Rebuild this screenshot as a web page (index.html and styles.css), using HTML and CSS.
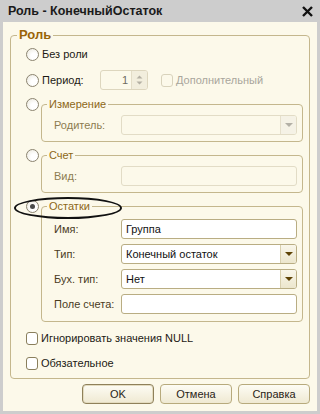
FILE: index.html
```html
<!DOCTYPE html>
<html lang="ru">
<head>
    <meta charset="UTF-8">
    <meta name="viewport" content="width=device-width, initial-scale=1.0">
    <title>Роль - КонечныйОстаток</title>
    <link rel="stylesheet" href="styles.css">
</head>
<body>
    <div class="window">
        <div class="titlebar">
            <span class="title">Роль - КонечныйОстаток</span>
            <svg class="close" width="11" height="11" viewBox="0 0 11 11">
                <path d="M1 1 L10 10 M10 1 L1 10" stroke="#111" stroke-width="2.4" fill="none"/>
            </svg>
        </div>

        <div class="content">
            <fieldset class="group main">
                <legend>Роль</legend>
                <div class="group-body">

                    <div class="row">
                        <span class="radio"></span>
                        <span class="text">Без роли</span>
                    </div>

                    <div class="row row-period">
                        <span class="radio"></span>
                        <span class="text period-label">Период:</span>
                        <div class="spin">
                            <span class="spin-value">1</span>
                            <span class="spin-btns">
                                <svg width="7" height="12" viewBox="0 0 7 12">
                                    <path d="M0.5 4.5 L3.5 1.5 L6.5 4.5 Z M0.5 7.5 L3.5 10.5 L6.5 7.5 Z" fill="#b4b0a4"/>
                                </svg>
                            </span>
                        </div>
                        <span class="check disabled"></span>
                        <span class="text dim">Дополнительный</span>
                    </div>

                    <div class="sub sub-first">
                        <span class="radio"></span>
                        <fieldset class="group inner">
                            <legend>Измерение</legend>
                            <div class="group-body">
                                <div class="field-row">
                                    <span class="field-label dim-label">Родитель:</span>
                                    <div class="input disabled select">
                                        <span class="value"></span>
                                        <span class="drop"><i class="arrow"></i></span>
                                    </div>
                                </div>
                            </div>
                        </fieldset>
                    </div>

                    <div class="sub">
                        <span class="radio"></span>
                        <fieldset class="group inner">
                            <legend>Счет</legend>
                            <div class="group-body">
                                <div class="field-row">
                                    <span class="field-label dim-label">Вид:</span>
                                    <div class="input disabled"></div>
                                </div>
                            </div>
                        </fieldset>
                    </div>

                    <div class="sub">
                        <span class="radio on"></span>
                        <fieldset class="group inner balances">
                            <legend>Остатки</legend>
                            <div class="group-body">
                                <div class="field-row">
                                    <span class="field-label">Имя:</span>
                                    <div class="input"><span class="value">Группа</span></div>
                                </div>
                                <div class="field-row">
                                    <span class="field-label">Тип:</span>
                                    <div class="input select">
                                        <span class="value">Конечный остаток</span>
                                        <span class="drop"><i class="arrow"></i></span>
                                    </div>
                                </div>
                                <div class="field-row">
                                    <span class="field-label">Бух. тип:</span>
                                    <div class="input select">
                                        <span class="value">Нет</span>
                                        <span class="drop"><i class="arrow"></i></span>
                                    </div>
                                </div>
                                <div class="field-row">
                                    <span class="field-label">Поле счета:</span>
                                    <div class="input"></div>
                                </div>
                            </div>
                        </fieldset>
                    </div>

                    <div class="row row-check">
                        <span class="check"></span>
                        <span class="text">Игнорировать значения NULL</span>
                    </div>

                    <div class="row row-check">
                        <span class="check"></span>
                        <span class="text">Обязательное</span>
                    </div>
                </div>
            </fieldset>

            <div class="buttons">
                <button class="btn default">OK</button>
                <button class="btn">Отмена</button>
                <button class="btn">Справка</button>
            </div>
        </div>

        <!-- hand-drawn highlight around the selected option -->
        <div class="mark"></div>
    </div>
</body>
</html>
```

FILE: styles.css
```css
body {
    margin: 0;
    padding: 0;
    font-family: "Liberation Sans", Arial, sans-serif;
    font-size: 11px;
    color: #1c1a14;
}
.window {
    position: relative;
    width: 320px;
    height: 414px;
    background: #cdcdcd;
    box-sizing: border-box;
    padding: 0 3px 3px 3px;
    display: flex;
    flex-direction: column;
}
.titlebar {
    height: 22px;
    display: flex;
    align-items: center;
    justify-content: space-between;
    padding: 0 4px 0 5px;
}
.title {
    font-weight: bold;
    font-size: 12.5px;
    color: #1a1a1a;
}
.close {
    display: block;
}
.content {
    flex: 1;
    background: #fcf9ea;
    padding: 5px 7px 0 7px;
}

/* group boxes */
.group {
    margin: 0;
    padding: 0;
    border: 1px solid #c4b78d;
    border-radius: 4px;
    min-inline-size: 0;
}
.group legend {
    padding: 0 2px;
    line-height: 14px;
}
.main > legend {
    margin-left: 6px;
    font-weight: bold;
    font-size: 13px;
    line-height: 16px;
    color: #9a6408;
}
.main > .group-body {
    padding: 1px 6px 5px 15px;
}
.inner {
    flex: 1;
}
.inner > legend {
    margin-left: 5px;
    color: #8d6716;
}
.inner > .group-body {
    padding: 4px 5px 6px 12px;
}
.balances > .group-body {
    padding-top: 6px;
    padding-bottom: 7px;
}

/* rows */
.row {
    height: 20px;
    display: flex;
    align-items: center;
}
.row-period,
.row-check {
    margin-top: 6px;
}
.row-check + .row-check {
    margin-top: 5px;
}
.text {
    margin-left: 3px;
    white-space: nowrap;
}
.dim {
    color: #a9a69c;
}
.period-label {
    width: 58px;
}
.sub {
    display: flex;
    align-items: flex-start;
    margin-top: 6px;
}
.sub-first {
    margin-top: 7px;
}
.sub > .radio {
    margin-top: 1px;
    margin-right: 2px;
}

/* radio and check */
.radio {
    flex: none;
    width: 11px;
    height: 11px;
    border: 1px solid #8b8470;
    border-radius: 50%;
    background: radial-gradient(circle at 65% 65%, #ffffff 30%, #e9e6da 100%);
    position: relative;
}
.radio.on::after {
    content: "";
    position: absolute;
    left: 3px;
    top: 3px;
    width: 5px;
    height: 5px;
    border-radius: 50%;
    background: #4a4a4a;
}
.check {
    flex: none;
    width: 10px;
    height: 11px;
    border: 1px solid #8a7f5c;
    border-radius: 3px;
    background: #fff;
}
.check.disabled {
    margin-left: 13px;
    border-color: #d9d3bc;
    background: #fcf9ea;
}

/* spinner */
.spin {
    width: 46px;
    height: 18px;
    border: 1px solid #ddd6be;
    border-radius: 3px;
    display: flex;
    overflow: hidden;
}
.spin-value {
    flex: 1;
    text-align: right;
    padding-right: 3px;
    line-height: 18px;
    color: #6e6b60;
}
.spin-btns {
    width: 15px;
    border-left: 1px solid #e3ddc7;
    background: #f2eedd;
    display: flex;
    align-items: center;
    justify-content: center;
}

/* fields */
.field-row {
    display: flex;
    align-items: center;
}
.field-row + .field-row {
    margin-top: 5px;
}
.field-label {
    width: 67px;
    flex: none;
    color: #4a3c1e;
}
.dim-label {
    color: #8d7c50;
}
.input {
    flex: 1;
    height: 18px;
    border: 1px solid #b9ad83;
    border-radius: 3px;
    background: #fff;
    display: flex;
    align-items: center;
    overflow: hidden;
}
.input.disabled {
    background: #fcf9ea;
    border-color: #e2dcc6;
}
.value {
    flex: 1;
    padding-left: 4px;
    color: #111;
    white-space: nowrap;
}
.drop {
    width: 15px;
    height: 18px;
    border-left: 1px solid #d8cfae;
    background: linear-gradient(#f9f6ea, #ece6cd);
    display: flex;
    align-items: center;
    justify-content: center;
}
.arrow {
    width: 0;
    height: 0;
    border-left: 4px solid transparent;
    border-right: 4px solid transparent;
    border-top: 4px solid #5e4305;
}
.disabled .drop {
    background: #f5f2e6;
    border-left-color: #e6e0cc;
}
.disabled .arrow {
    border-top-color: #b3b0a6;
}

/* buttons */
.buttons {
    display: flex;
    justify-content: flex-end;
    gap: 6px;
    margin-top: 5px;
}
.btn {
    width: 72px;
    height: 20px;
    padding: 0;
    font-family: inherit;
    font-size: 11px;
    color: #2a2416;
    border: 1px solid #b7aa7c;
    border-radius: 4px;
    background: linear-gradient(#fdfcf4, #efe9d2);
}
.btn.default {
    border-color: #8f815a;
    box-shadow: inset 0 0 0 1px #e4dcc0;
}

/* overlay annotation */
.mark {
    position: absolute;
    left: 14px;
    top: 197px;
    width: 104px;
    height: 18px;
    border: 2px solid #111;
    border-radius: 50%;
}
```
